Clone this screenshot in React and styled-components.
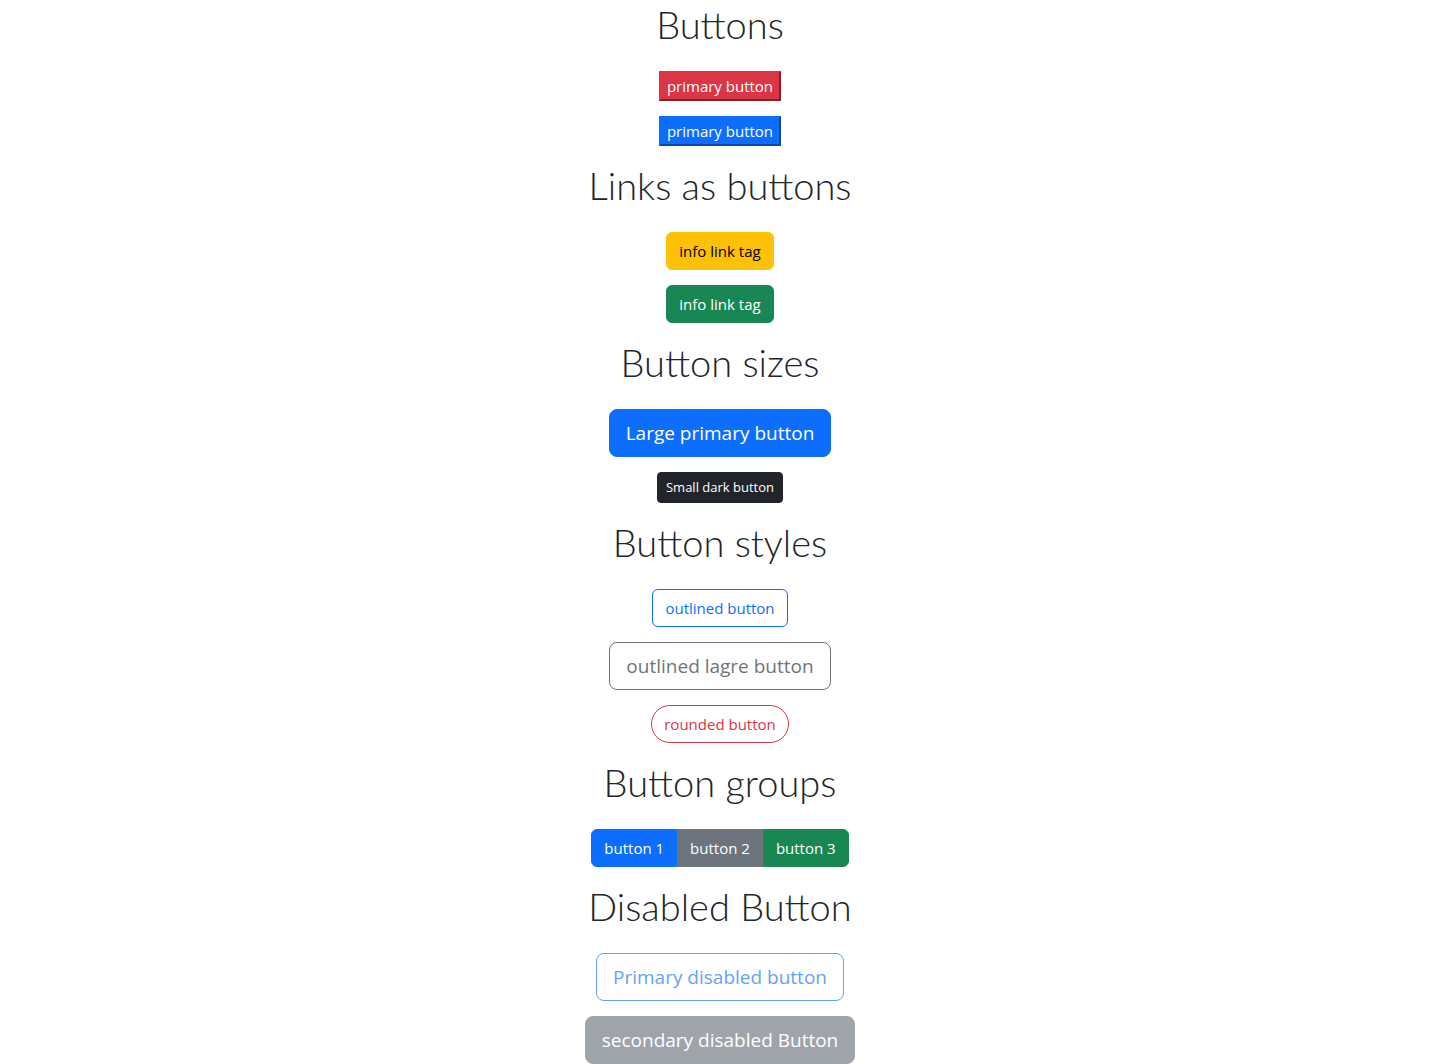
import React from 'react';
import styled, { createGlobalStyle, css } from 'styled-components';

const GlobalStyle = createGlobalStyle`
  body {
    margin: 0;
    font-family: 'Open Sans', 'Noto Sans', sans-serif;
    color: #212529;
    background: #ffffff;
  }
`;

const colors = {
  primary: '#0d6efd',
  secondary: '#6c757d',
  success: '#198754',
  danger: '#dc3545',
  warning: '#ffc107',
  dark: '#212529',
};

const Page = styled.div`
  display: flex;
  flex-direction: column;
  align-items: center;
  gap: 15px;
  text-align: center;
`;

const Section = styled.section`
  display: flex;
  flex-direction: column;
  align-items: center;
`;

const Heading = styled.h1`
  margin: 0 0 23px;
  font-family: Lato, 'Open Sans', sans-serif;
  font-size: 38px;
  line-height: 48px;
  font-weight: 300;
  color: #212529;
`;

const Stack = styled.div`
  display: flex;
  flex-direction: column;
  align-items: center;
  gap: 15px;
`;

// plain browser button with a colour, like an unstyled <button>
const PlainButton = styled.button`
  font-family: inherit;
  font-size: 15px;
  line-height: 24px;
  padding: 1px 6px;
  color: #ffffff;
  background: ${(p) => colors[p.$variant]};
  border: 2px outset ${(p) => colors[p.$variant]};
  border-radius: 0;
  cursor: pointer;
`;

const sizes = {
  sm: css`
    padding: 4px 8px;
    font-size: 13px;
    line-height: 21px;
    border-radius: 4px;
  `,
  md: css`
    padding: 6px 12px;
    font-size: 15px;
    line-height: 24px;
    border-radius: 6px;
  `,
  lg: css`
    padding: 8px 16px;
    font-size: 19px;
    line-height: 30px;
    border-radius: 8px;
  `,
};

const Btn = styled.button`
  display: inline-block;
  font-family: inherit;
  font-weight: 400;
  text-decoration: none;
  cursor: pointer;
  border: 1px solid ${(p) => colors[p.$variant]};
  ${(p) => sizes[p.$size || 'md']}
  ${(p) =>
    p.$outline
      ? css`
          background: transparent;
          color: ${colors[p.$variant]};
        `
      : css`
          background: ${colors[p.$variant]};
          color: ${p.$variant === 'warning' ? '#000000' : '#ffffff'};
        `}
  ${(p) => p.$pill && 'border-radius: 50rem;'}
  ${(p) =>
    p.disabled &&
    css`
      opacity: 0.65;
      cursor: default;
    `}
`;

const LinkBtn = styled(Btn).attrs({ as: 'a' })``;

const Group = styled.div`
  display: inline-flex;

  & > ${Btn} {
    border-radius: 0;
  }
  & > ${Btn}:first-child {
    border-radius: 6px 0 0 6px;
  }
  & > ${Btn}:last-child {
    border-radius: 0 6px 6px 0;
  }
`;

const App = () => {
  return (
    <Page>
      <GlobalStyle />
      <Section>
        <Heading>Buttons</Heading>
        <Stack>
          <PlainButton $variant="danger">primary button</PlainButton>
          <PlainButton $variant="primary">primary button</PlainButton>
        </Stack>
      </Section>

      <Section>
        <Heading>Links as buttons</Heading>
        <Stack>
          <LinkBtn href="#" $variant="warning">info link tag</LinkBtn>
          <LinkBtn href="#" $variant="success">info link tag</LinkBtn>
        </Stack>
      </Section>

      <Section>
        <Heading>Button sizes</Heading>
        <Stack>
          <Btn $variant="primary" $size="lg">Large primary button</Btn>
          <Btn $variant="dark" $size="sm">Small dark button</Btn>
        </Stack>
      </Section>

      <Section>
        <Heading>Button styles</Heading>
        <Stack>
          <Btn $variant="primary" $outline>outlined button</Btn>
          <Btn $variant="secondary" $outline $size="lg">outlined lagre button</Btn>
          <Btn $variant="danger" $outline $pill>rounded button</Btn>
        </Stack>
      </Section>

      <Section>
        <Heading>Button groups</Heading>
        <Group>
          <Btn $variant="primary">button 1</Btn>
          <Btn $variant="secondary">button 2</Btn>
          <Btn $variant="success">button 3</Btn>
        </Group>
      </Section>

      <Section>
        <Heading>Disabled Button</Heading>
        <Stack>
          <Btn $variant="primary" $outline $size="lg" disabled>Primary disabled button</Btn>
          <Btn $variant="secondary" $size="lg" disabled>secondary disabled Button</Btn>
        </Stack>
      </Section>
    </Page>
  );
};

export default App;
